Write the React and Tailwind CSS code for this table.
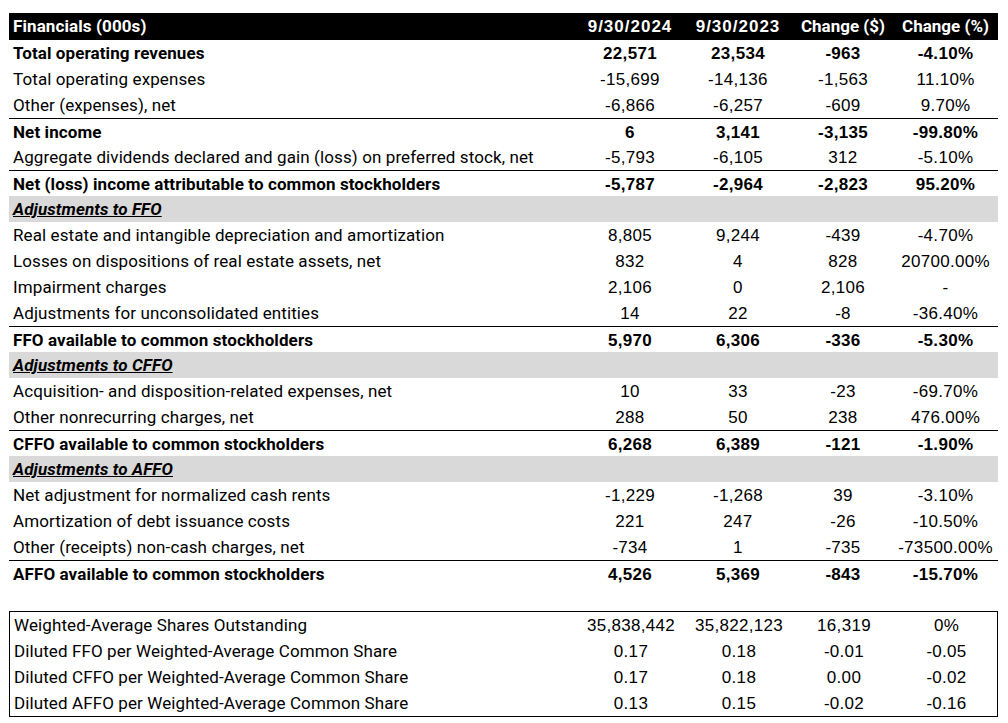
import React from "react";

const rows = [
  { t: "Total operating revenues", v: ["22,571", "23,534", "-963", "-4.10%"], b: true },
  { t: "Total operating expenses", v: ["-15,699", "-14,136", "-1,563", "11.10%"] },
  { t: "Other (expenses), net", v: ["-6,866", "-6,257", "-609", "9.70%"] },
  { t: "Net income", v: ["6", "3,141", "-3,135", "-99.80%"], b: true, line: true },
  { t: "Aggregate dividends declared and gain (loss) on preferred stock, net", v: ["-5,793", "-6,105", "312", "-5.10%"] },
  { t: "Net (loss) income attributable to common stockholders", v: ["-5,787", "-2,964", "-2,823", "95.20%"], b: true, line: true },
  { t: "Adjustments to FFO", sec: true },
  { t: "Real estate and intangible depreciation and amortization", v: ["8,805", "9,244", "-439", "-4.70%"] },
  { t: "Losses on dispositions of real estate assets, net", v: ["832", "4", "828", "20700.00%"] },
  { t: "Impairment charges", v: ["2,106", "0", "2,106", "-"] },
  { t: "Adjustments for unconsolidated entities", v: ["14", "22", "-8", "-36.40%"] },
  { t: "FFO available to common stockholders", v: ["5,970", "6,306", "-336", "-5.30%"], b: true, line: true },
  { t: "Adjustments to CFFO", sec: true },
  { t: "Acquisition- and disposition-related expenses, net", v: ["10", "33", "-23", "-69.70%"] },
  { t: "Other nonrecurring charges, net", v: ["288", "50", "238", "476.00%"] },
  { t: "CFFO available to common stockholders", v: ["6,268", "6,389", "-121", "-1.90%"], b: true, line: true },
  { t: "Adjustments to AFFO", sec: true },
  { t: "Net adjustment for normalized cash rents", v: ["-1,229", "-1,268", "39", "-3.10%"] },
  { t: "Amortization of debt issuance costs", v: ["221", "247", "-26", "-10.50%"] },
  { t: "Other (receipts) non-cash charges, net", v: ["-734", "1", "-735", "-73500.00%"] },
  { t: "AFFO available to common stockholders", v: ["4,526", "5,369", "-843", "-15.70%"], b: true, line: true },
];

const box = [
  { t: "Weighted-Average Shares Outstanding", v: ["35,838,442", "35,822,123", "16,319", "0%"] },
  { t: "Diluted FFO per Weighted-Average Common Share", v: ["0.17", "0.18", "-0.01", "-0.05"] },
  { t: "Diluted CFFO per Weighted-Average Common Share", v: ["0.17", "0.18", "0.00", "-0.02"] },
  { t: "Diluted AFFO per Weighted-Average Common Share", v: ["0.13", "0.15", "-0.02", "-0.16"] },
];

const grid = "grid grid-cols-[568px_106px_110px_100px_105px]";
const lab = "font-['Roboto',sans-serif] text-[17px] tracking-[0.1px] pl-1 pt-px flex items-center whitespace-nowrap";
const num = "font-['Liberation_Sans',Arial,sans-serif] text-[17px] tracking-[0.3px] pt-px flex items-center justify-center whitespace-nowrap";
const head = "font-['Roboto',sans-serif] text-[17px] pt-px flex items-center justify-center whitespace-nowrap";
const date = "font-['Liberation_Sans',Arial,sans-serif] text-[17px] tracking-[1px] pt-px flex items-center justify-center whitespace-nowrap";

function Row({ r }) {
  if (r.sec) {
    return (
      <div className={`${grid} h-[26px] bg-[#d9d9d9] text-black`}>
        <div className={`${lab} font-bold italic underline`}>{r.t}</div>
      </div>
    );
  }
  return (
    <div className={`${grid} h-[26px] text-black ${r.line ? "border-t border-black" : ""} ${r.b ? "font-bold" : ""}`}>
      <div className={lab}>{r.t}</div>
      {r.v.map((x, i) => (
        <div key={i} className={num}>{x}</div>
      ))}
    </div>
  );
}

export default function App() {
  return (
    <div className="w-[1008px] h-[723px] bg-white pt-[13px] pl-[9px] overflow-hidden">
      <div className="w-[989px]">
        <div className={`${grid} h-[27px] bg-black text-white font-bold`}>
          <div className={lab}>Financials (000s)</div>
          <div className={date}>9/30/2024</div>
          <div className={date}>9/30/2023</div>
          <div className={head}>Change ($)</div>
          <div className={head}>Change (%)</div>
        </div>
        {rows.map((r, i) => (
          <Row key={i} r={r} />
        ))}
        <div className="h-[25px]" />
        <div className="border border-black w-[989px]">
          {box.map((r, i) => (
            <div key={i} className={`${grid} h-[26px] text-black`}>
              <div className={lab}>{r.t}</div>
              {r.v.map((x, j) => (
                <div key={j} className={num}>{x}</div>
              ))}
            </div>
          ))}
        </div>
      </div>
    </div>
  );
}
